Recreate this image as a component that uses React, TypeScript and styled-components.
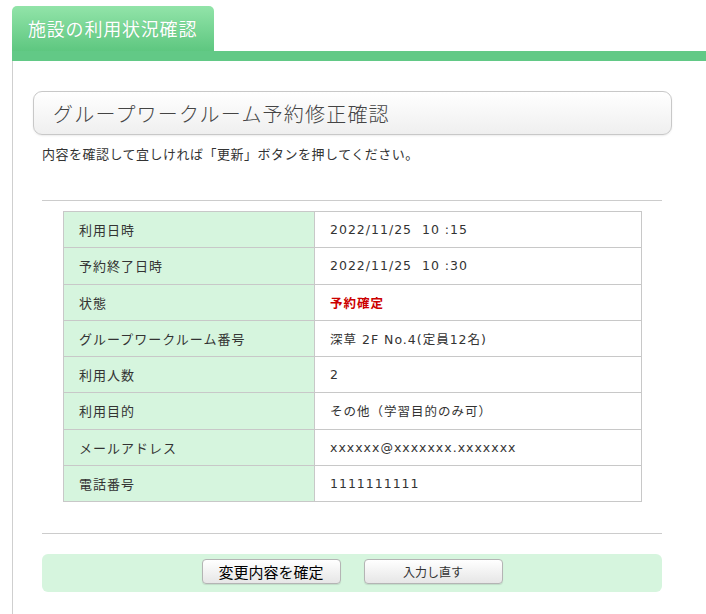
import React from "react";
import styled, { createGlobalStyle } from "styled-components";

const Global = createGlobalStyle`
  html, body { margin: 0; padding: 0; background: #fff; overflow: hidden; }
  body { font-family: "Noto Sans CJK JP", "Noto Sans", sans-serif; color: #333; }
`;

const Page = styled.div`
  padding: 6px 0 0 12px;
  width: 694px;
`;

const TabRow = styled.div`
  display: flex;
`;

const Tab = styled.div`
  width: 202px;
  height: 45px;
  box-sizing: border-box;
  padding: 9px 0 0 16px;
  border-radius: 5px 5px 0 0;
  background: linear-gradient(#92e4a9, #5ec780);
  color: #fff;
  font-size: 18px;
  letter-spacing: 0.8px;
  line-height: 26px;
  text-shadow: 0 0 1px rgba(0, 80, 30, 0.2);
`;

const Bar = styled.div`
  height: 10px;
  background: #62c986;
`;

const Panel = styled.div`
  border-left: 1px solid #cfcfcf;
  padding: 30px 0 30px 20px;
  min-height: 520px;
  box-sizing: border-box;
`;

const Column = styled.div`
  width: 639px;
  display: flex;
  flex-direction: column;
`;

const Heading = styled.h1`
  margin: 0;
  height: 44px;
  box-sizing: border-box;
  border: 1px solid #c8c8c8;
  border-radius: 9px;
  background: linear-gradient(#ffffff, #efefef);
  box-shadow: 0 1px 2px rgba(0, 0, 0, 0.08);
  padding: 0 0 0 19px;
  display: flex;
  align-items: center;
  font-size: 20px;
  font-weight: 300;
  letter-spacing: 1.2px;
  color: #444;
`;

const Lead = styled.p`
  margin: 9px 0 0 9px;
  font-size: 13px;
  line-height: 20px;
  letter-spacing: 0.5px;
  color: #333;
`;

const Rule = styled.hr<{ $top: number }>`
  margin: ${(p) => p.$top}px 10px 0 9px;
  border: 0;
  border-top: 1px solid #cccccc;
  height: 0;
`;

const Table = styled.table`
  margin: 10px 30px 0 30px;
  border-collapse: collapse;
  width: 579px;
`;

const Label = styled.th`
  width: 251px;
  box-sizing: border-box;
  height: 35.25px;
  padding: 0 0 0 15px;
  text-align: left;
  font-weight: 400;
  font-size: 13px;
  letter-spacing: 1px;
  color: #333;
  background: #d6f5de;
  border: 1px solid #c8c8c8;
`;

const Value = styled.td<{ $alert?: boolean }>`
  height: 35.25px;
  padding: 0 0 0 15px;
  letter-spacing: 1px;
  color: ${(p) => (p.$alert ? "#cc0000" : "#333")};
  font-weight: ${(p) => (p.$alert ? 700 : 400)};
  border: 1px solid #c8c8c8;
  font-family: "DejaVu Sans", "Noto Sans CJK JP", sans-serif;
  font-size: 12.5px;
`;

const Footer = styled.div`
  margin: 20px 10px 0 9px;
  height: 38px;
  border-radius: 6px;
  background: #d6f5de;
  display: flex;
  justify-content: center;
  align-items: flex-start;
  gap: 23px;
  padding-top: 5px;
  box-sizing: border-box;
`;

const Button = styled.button<{ $large?: boolean }>`
  width: 139px;
  height: 25px;
  border: 1px solid #b4b4b4;
  border-radius: 4px;
  background: linear-gradient(#ffffff, #e6e6e6);
  box-shadow: 0 1px 1px rgba(0, 0, 0, 0.1);
  font-family: "Noto Sans CJK JP", sans-serif;
  font-size: ${(p) => (p.$large ? "15px" : "12px")};
  color: ${(p) => (p.$large ? "#000" : "#333")};
  padding: 0;
  line-height: 1;
`;

const rows: { label: string; value: string; alert?: boolean }[] = [
  { label: "利用日時", value: "2022/11/25\u00a0 10 :15" },
  { label: "予約終了日時", value: "2022/11/25\u00a0 10 :30" },
  { label: "状態", value: "予約確定", alert: true },
  { label: "グループワークルーム番号", value: "深草 2F No.4(定員12名)" },
  { label: "利用人数", value: "2" },
  { label: "利用目的", value: "その他（学習目的のみ可）" },
  { label: "メールアドレス", value: "xxxxxx@xxxxxxx.xxxxxxx" },
  { label: "電話番号", value: "1111111111" },
];

export default function App() {
  return (
    <>
      <Global />
      <Page>
        <TabRow>
          <Tab>施設の利用状況確認</Tab>
        </TabRow>
        <Bar />
        <Panel>
          <Column>
            <Heading>グループワークルーム予約修正確認</Heading>
            <Lead>内容を確認して宜しければ「更新」ボタンを押してください。</Lead>
            <Rule $top={36} />
            <Table>
              <tbody>
                {rows.map((r) => (
                  <tr key={r.label}>
                    <Label>{r.label}</Label>
                    <Value $alert={r.alert}>{r.value}</Value>
                  </tr>
                ))}
              </tbody>
            </Table>
            <Rule $top={31} />
            <Footer>
              <Button $large>変更内容を確定</Button>
              <Button>入力し直す</Button>
            </Footer>
          </Column>
        </Panel>
      </Page>
    </>
  );
}
